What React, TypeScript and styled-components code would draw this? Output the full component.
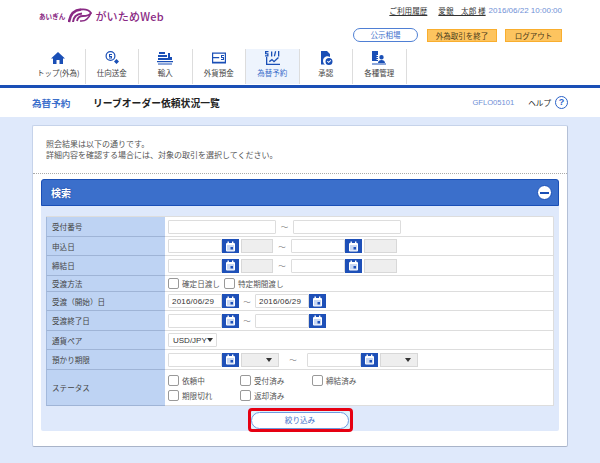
import React from 'react'
import styled, { createGlobalStyle } from 'styled-components'

const Global = createGlobalStyle`
	html, body {
		margin: 0;
		padding: 0;
		background: #dfe9fb;
	}
	body {
		font-family: "Noto Sans CJK JP", "Noto Sans", sans-serif;
		font-size: 8px;
		color: #444;
		width: 600px;
		height: 463px;
		overflow: hidden;
	}
`

const Header = styled.header`
	background: #fff;
	height: 85px;
	border-bottom: 3px solid #1a4fb6;
	padding-left: 32px;
	padding-right: 32px;
`
const TopBar = styled.div`
	height: 49px;
	display: flex;
	justify-content: space-between;
`
const Logo = styled.div`
	display: flex;
	align-items: center;
	height: 15px;
	margin-top: 8px;
	margin-left: 7px;
	color: #8a2a84;
`
const BankName = styled.span`
	font-size: 6.6px;
	font-weight: 700;
	margin-right: 3px;
`
const Brand = styled.span`
	font-size: 11px;
	font-weight: 500;
	margin-left: 3px;
	letter-spacing: 0.2px;
	font-family: "Noto Sans CJK JP", sans-serif;
`
const TopRight = styled.div`
	display: flex;
	flex-direction: column;
	align-items: flex-end;
	margin-right: 6px;
`
const UserLine = styled.div`
	display: flex;
	align-items: center;
	height: 11px;
	margin-top: 5px;
	font-size: 7.6px;
	color: #333;
`
const UserLink = styled.span<{ $gap?: number }>`
	text-decoration: underline;
	margin-right: ${(p) => p.$gap ?? 0}px;
`
const Clock = styled.span`
	color: #6f8fd6;
	font-family: "Liberation Sans", sans-serif;
	font-size: 8px;
	margin-left: 3px;
`
const TopButtons = styled.div`
	display: flex;
	align-items: center;
	height: 15px;
	margin-top: 11px;
`
const RatePill = styled.div`
	width: 65px;
	height: 14px;
	box-sizing: border-box;
	border: 1px solid #4f7fd4;
	border-radius: 7px;
	color: #3c6fcb;
	font-size: 7.5px;
	line-height: 11px;
	text-align: center;
	margin-right: 9px;
`
const OrangeButton = styled.div<{ $w: number; $ml?: number }>`
	width: ${(p) => p.$w}px;
	height: 13px;
	margin-left: ${(p) => p.$ml ?? 0}px;
	margin-top: 1px;
	box-sizing: border-box;
	background: #fdc45f;
	border: 1px solid #f9ae2e;
	color: #4a3a1a;
	font-size: 7.5px;
	line-height: 11px;
	text-align: center;
`
const Nav = styled.nav`
	display: flex;
	height: 36px;
`
const NavItem = styled.div<{ $active?: boolean }>`
	width: 53.5px;
	height: 35px;
	box-sizing: border-box;
	border-right: 1px solid #ddd;
	background: ${(p) => (p.$active ? '#eef4fd' : 'transparent')};
	color: ${(p) => (p.$active ? '#3c6fcb' : '#444')};
	display: flex;
	flex-direction: column;
	align-items: center;
	font-size: 7.5px;
	line-height: 10px;
`
const NavIcon = styled.svg`
	width: 16px;
	height: 14px;
	margin-top: 2px;
	margin-bottom: 3px;
	fill: #1a4fb6;
`
const SubBar = styled.div`
	height: 29px;
	background: #fff;
	padding: 0 32px;
	display: flex;
	align-items: center;
`
const SubSection = styled.div`
	color: #3c6fcb;
	font-size: 9.6px;
	font-weight: 700;
	width: 61px;
`
const SubTitle = styled.div`
	color: #222;
	font-size: 9.8px;
	font-weight: 700;
	flex: 1;
`
const ScreenId = styled.div`
	color: #6f8fd6;
	font-family: "Liberation Sans", sans-serif;
	font-size: 7.6px;
	margin-right: 14px;
`
const HelpLabel = styled.div`
	color: #222;
	font-size: 7.6px;
	margin-right: 4px;
`
const HelpIcon = styled.div`
	width: 13px;
	height: 13px;
	box-sizing: border-box;
	border: 1.5px solid #2a62c8;
	border-radius: 50%;
	color: #2a62c8;
	font: 700 9px/10px "Liberation Sans", sans-serif;
	text-align: center;
`
const Card = styled.main`
	width: 536px;
	height: 322px;
	box-sizing: border-box;
	margin: 8px 32px 0;
	background: #fff;
	border: 1px solid #c6d3ea;
	border-right-color: #b4c0d6;
	border-bottom-color: #a9b4c9;
	border-radius: 2px;
`
const Intro = styled.div`
	padding: 12px 13px 13px;
	height: 48px;
	box-sizing: border-box;
	border-bottom: 1px dotted #aaa;
	font-size: 8px;
	line-height: 11px;
	color: #555;
`
const Panel = styled.section`
	margin: 5px 8px 0;
	background: #dfe9fb;
	border-radius: 3px 3px 2px 2px;
	height: 252px;
`
const PanelHead = styled.div`
	height: 27px;
	box-sizing: border-box;
	background: #3b6fcb;
	border: 1px solid #1a4fb6;
	border-radius: 3px 3px 0 0;
	display: flex;
	align-items: center;
	justify-content: space-between;
	padding: 0 6px 0 9px;
`
const PanelTitle = styled.div`
	color: #fff;
	font-size: 10px;
	font-weight: 700;
	text-shadow: 0 0 2px #1a3f96;
`
const Collapse = styled.div`
	width: 15px;
	height: 15px;
	box-sizing: border-box;
	background: #fff;
	border: 1px solid #1a4fb6;
	border-radius: 50%;
	display: flex;
	align-items: center;
	justify-content: center;
	&::before {
		content: '';
		width: 9px;
		height: 2px;
		background: #1a4fb6;
	}
`
const Form = styled.div`
	margin: 10px 5px 0;
	border-top: 1px solid #ddd;
	border-right: 1px solid #ddd;
	border-radius: 0 2px 0 0;
	background: #fff;
`
const Row = styled.div<{ $h: number }>`
	display: flex;
	height: ${(p) => p.$h}px;
`
const Label = styled.div`
	width: 119px;
	flex: none;
	box-sizing: border-box;
	background: #bed3f3;
	border-left: 1px solid #a3b9dc;
	border-bottom: 1px solid #9fb4d6;
	padding-left: 5px;
	display: flex;
	align-items: center;
	font-size: 7.6px;
	color: #444;
`
const Value = styled.div`
	flex: 1;
	box-sizing: border-box;
	border-bottom: 1px solid #ddd;
	padding-left: 3px;
	display: flex;
	align-items: center;
`
const Field = styled.input<{ $w: number }>`
	width: ${(p) => p.$w}px;
	height: 14px;
	box-sizing: border-box;
	border: 1px solid #ddd;
	border-radius: 1px;
	padding: 0 3px;
	margin: 0;
	background: #fff;
	font: 8px "Liberation Sans", sans-serif;
	letter-spacing: 0.2px;
	color: #333;
	outline: none;
`
const CalButton = styled.div`
	width: 17px;
	height: 14px;
	flex: none;
	background: #1e50b8;
	display: flex;
	align-items: center;
	justify-content: center;
`
const GrayBox = styled.div<{ $w: number }>`
	width: ${(p) => p.$w}px;
	height: 14px;
	box-sizing: border-box;
	margin-left: 2px;
	background: #eee;
	border: 1px solid #d8d8d8;
	display: flex;
	align-items: center;
	justify-content: flex-end;
	padding-right: 6px;
`
const Arrow = styled.div`
	width: 0;
	height: 0;
	border-left: 3.5px solid transparent;
	border-right: 3.5px solid transparent;
	border-top: 4px solid #333;
`
const Tilde = styled.div<{ $w: number }>`
	width: ${(p) => p.$w}px;
	text-align: center;
	color: #777;
	font-size: 7.5px;
`
const CheckGroup = styled.label<{ $w: number }>`
	width: ${(p) => p.$w}px;
	height: 11px;
	display: flex;
	align-items: center;
	font-size: 7.6px;
	color: #555;
`
const CheckBox = styled.span`
	width: 11px;
	height: 11px;
	box-sizing: border-box;
	flex: none;
	background: #fff;
	border: 1px solid #999;
	border-radius: 2px;
	margin-right: 3px;
`
const StatusGrid = styled.div`
	display: grid;
	grid-template-columns: 72px 72px 72px;
	row-gap: 4px;
`
const CurrencySelect = styled.div`
	width: 49px;
	height: 14px;
	box-sizing: border-box;
	border: 1px solid #ddd;
	border-radius: 1px;
	display: flex;
	align-items: center;
	justify-content: space-between;
	padding: 0 3px 0 4px;
	font: 8px "Liberation Sans", sans-serif;
	color: #333;
`
const Actions = styled.div`
	display: flex;
	justify-content: center;
	margin-top: 2px;
`
const Highlight = styled.div`
	width: 105px;
	height: 24px;
	box-sizing: border-box;
	border: 3px solid #e60012;
	border-radius: 4px;
	background: #dff3fb;
	padding: 0;
	display: flex;
`
const SubmitButton = styled.button`
	width: 98px;
	height: 17px;
	margin: 0.5px auto;
	padding: 0;
	box-sizing: border-box;
	background: #fff;
	border: 1px solid #6f9ae0;
	border-radius: 9px;
	color: #3c6fcb;
	font-family: "Noto Sans CJK JP", sans-serif;
	font-size: 7.6px;
	line-height: 14px;
`

const Calendar = () => (
	<CalButton>
		<svg width="11" height="11" viewBox="0 0 11 11">
			<rect x="1" y="2" width="9" height="8.5" rx="1" fill="#fff" />
			<rect x="2.5" y="0.5" width="1.4" height="2.5" fill="#fff" />
			<rect x="7" y="0.5" width="1.4" height="2.5" fill="#fff" />
			<rect x="2" y="4" width="7" height="5.5" fill="#c9d8f3" />
			<rect x="5.5" y="6" width="2.5" height="2.5" fill="#1e50b8" />
		</svg>
	</CalButton>
)

const DateField = ({ w = 54, value = '' }: { w?: number; value?: string }) => (
	<>
		<Field $w={w} defaultValue={value} readOnly />
		<Calendar />
	</>
)

const Check = ({ w, children }: { w?: number; children: React.ReactNode }) => (
	<CheckGroup $w={w ?? 72}>
		<CheckBox />
		{children}
	</CheckGroup>
)

const navItems = [
	{
		label: 'トップ(外為)',
		icon: <path d="M8 1 1 7.5h2V13h3.5V9h3v4H13V7.500h2z" />,
	},
	{
		label: '仕向送金',
		icon: (
			<>
				<path fillRule="evenodd" d="M6.500 0a5 5 0 1 0 0 10 5 5 0 0 0 0-10zm0 1.200a3.800 3.800 0 1 1 0 7.600 3.800 3.800 0 0 1 0-7.600z" />
				<path d="M5 3h3v1H6v1h2v2.500H5v-1h2V6H5zM12.500 8l2.500 2.500-2.500 2.500-2.500-2.500z" />
			</>
		),
	},
	{
		label: '輸入',
		icon: (
			<>
				<path d="M2 1h6v2H2zM1 4h9v2H1zM11 2h2v4h2v3H1V7h10z" />
				<path d="M0 10h16v1.200H0zM1 12.500h14v1H1z" />
			</>
		),
	},
	{
		label: '外貨預金',
		icon: (
			<path fillRule="evenodd" d="M1 1.500h14v11H1zm1.200 1.200v3.300h6v1.200h-6v3.600h11.600V2.700zM10 4h3v1h-2v1h2v3h-3V8h2V7h-2z" />
		),
	},
	{
		label: '為替予約',
		active: true,
		icon: (
			<path d="M1 0h3.500v1.200H2.300v1h2.200v3.300H1V4.300h2.200v-1H1zM7 .5h1.300v5H7zM11 0l1.200.4-1.200 5-1.200-.4zM14 0h1.300v5.500H14zM2 6h1.300v6.700H16V14H2zM5 10l3-2.200 2 2 4-3.800.9.900L10 11.500l-2-2-2.400 1.700z" />
		),
	},
	{
		label: '承認',
		icon: (
			<>
				<path d="M3 0h6l3 3v3a4.500 4.500 0 0 0-5 7.500H3z" />
				<path fillRule="evenodd" d="M11 7a3.500 3.500 0 1 0 0 7 3.500 3.500 0 0 0 0-7zm1.500 2 .7.700L10.700 12 9 10.500l.7-.7 1 .9z" />
			</>
		),
	},
	{
		label: '各種管理',
		icon: (
			<>
				<path d="M1 0h6v4h-1.500v1H7v1H5.500v1H7v1H5.500v1H7v1H1z" />
				<path d="M10.500 4a2.200 2.200 0 1 1 0 4.400 2.200 2.200 0 0 1 0-4.400zM7 12c0-2 1.500-3 3.500-3s3.500 1 3.500 3zM1 12.500h14v1H1z" />
			</>
		),
	},
]

const App = () => (
	<>
		<Global />
		<Header>
			<TopBar>
				<Logo>
					<BankName>あいぎん</BankName>
					<svg width="24" height="15" viewBox="0 0 24 15" fill="none" stroke="#8a2a84">
						<path d="M1 14C2 6 7 2 13 1.500" strokeWidth="2.500" />
						<path d="M5 14C5.500 9 9 6 14 5.500" strokeWidth="2" />
						<path d="M9 13c.5-3 3-5 6-5s6 0 8-3c-2-3-6-4-10-3.500" strokeWidth="1.800" />
						<path d="M12 13c4 .5 8-.5 11-8" strokeWidth="1.500" />
					</svg>
					<Brand>がいためWeb</Brand>
				</Logo>
				<TopRight>
					<UserLine>
						<UserLink $gap={11}>ご利用履歴</UserLink>
						<UserLink>愛銀　太郎 様</UserLink>
						<Clock>2016/06/22 10:00:00</Clock>
					</UserLine>
					<TopButtons>
						<RatePill>公示相場</RatePill>
						<OrangeButton $w={70}>外為取引を終了</OrangeButton>
						<OrangeButton $w={57} $ml={8}>ログアウト</OrangeButton>
					</TopButtons>
				</TopRight>
			</TopBar>
			<Nav>
				{navItems.map((item) => (
					<NavItem key={item.label} $active={item.active}>
						<NavIcon viewBox="0 0 16 14">{item.icon}</NavIcon>
						{item.label}
					</NavItem>
				))}
			</Nav>
		</Header>
		<SubBar>
			<SubSection>為替予約</SubSection>
			<SubTitle>リーブオーダー依頼状況一覧</SubTitle>
			<ScreenId>GFLO05101</ScreenId>
			<HelpLabel>ヘルプ</HelpLabel>
			<HelpIcon>?</HelpIcon>
		</SubBar>
		<Card>
			<Intro>
				照会結果は以下の通りです。
				<br />
				詳細内容を確認する場合には、対象の取引を選択してください。
			</Intro>
			<Panel>
				<PanelHead>
					<PanelTitle>検索</PanelTitle>
					<Collapse />
				</PanelHead>
				<Form>
					<Row $h={20}>
						<Label>受付番号</Label>
						<Value>
							<Field $w={108} readOnly />
							<Tilde $w={17}>～</Tilde>
							<Field $w={108} readOnly />
						</Value>
					</Row>
					<Row $h={19}>
						<Label>申込日</Label>
						<Value>
							<DateField />
							<GrayBox $w={32} />
							<Tilde $w={18}>～</Tilde>
							<DateField />
							<GrayBox $w={33} />
						</Value>
					</Row>
					<Row $h={20}>
						<Label>締結日</Label>
						<Value>
							<DateField />
							<GrayBox $w={32} />
							<Tilde $w={18}>～</Tilde>
							<DateField />
							<GrayBox $w={33} />
						</Value>
					</Row>
					<Row $h={16}>
						<Label>受渡方法</Label>
						<Value>
							<Check w={56}>確定日渡し</Check>
							<Check>特定期間渡し</Check>
						</Value>
					</Row>
					<Row $h={19}>
						<Label>受渡（開始）日</Label>
						<Value>
							<DateField value="2016/06/29" />
							<Tilde $w={16}>～</Tilde>
							<DateField value="2016/06/29" />
						</Value>
					</Row>
					<Row $h={20}>
						<Label>受渡終了日</Label>
						<Value>
							<DateField />
							<Tilde $w={16}>～</Tilde>
							<DateField />
						</Value>
					</Row>
					<Row $h={19}>
						<Label>通貨ペア</Label>
						<Value>
							<CurrencySelect>
								USD/JPY
								<Arrow />
							</CurrencySelect>
						</Value>
					</Row>
					<Row $h={20}>
						<Label>預かり期限</Label>
						<Value>
							<DateField />
							<GrayBox $w={38}>
								<Arrow />
							</GrayBox>
							<Tilde $w={28}>～</Tilde>
							<DateField />
							<GrayBox $w={38}>
								<Arrow />
							</GrayBox>
						</Value>
					</Row>
					<Row $h={36}>
						<Label>ステータス</Label>
						<Value>
							<StatusGrid>
								<Check>依頼中</Check>
								<Check>受付済み</Check>
								<Check>締結済み</Check>
								<Check>期限切れ</Check>
								<Check>返却済み</Check>
							</StatusGrid>
						</Value>
					</Row>
				</Form>
				<Actions>
					<Highlight>
						<SubmitButton>絞り込み</SubmitButton>
					</Highlight>
				</Actions>
			</Panel>
		</Card>
	</>
)

export default App
